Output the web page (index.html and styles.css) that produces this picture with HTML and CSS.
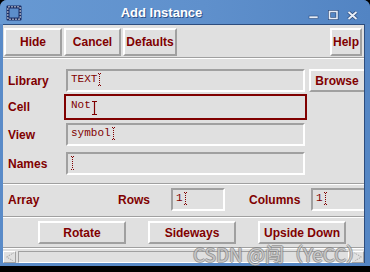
FILE: index.html
```html
<!DOCTYPE html>
<html lang="en">
<head>
    <meta charset="UTF-8">
    <link rel="stylesheet" href="styles.css">
</head>
<body>
    <div class="window">
        <!-- Title bar -->
        <div class="titlebar">
            <svg class="win-icon" width="16" height="16" viewBox="0 0 16 16">
                <rect x="0.5" y="0.5" width="15" height="15" rx="1" fill="#1b2d63"/>
                <rect x="2" y="2" width="12" height="12" fill="none" stroke="#ffffff" stroke-width="1" stroke-dasharray="2 1"/>
                <rect x="3" y="3" width="10" height="10" fill="#5c8dca" stroke="#1b2d63" stroke-width="1"/>
            </svg>
            <div class="title">Add Instance</div>
            <svg class="win-controls" width="56" height="24" viewBox="0 0 56 24">
                <rect x="4" y="16" width="9" height="2.5" fill="#e6edf7" stroke="#2b4a7c" stroke-width="0.6"/>
                <rect x="24.5" y="11.5" width="7.5" height="7" fill="none" stroke="#2b4a7c" stroke-width="3"/>
                <rect x="24.5" y="11.5" width="7.5" height="7" fill="none" stroke="#e6edf7" stroke-width="1.6"/>
                <path d="M43.5 12 L51.5 19 M51.5 12 L43.5 19" stroke="#2b4a7c" stroke-width="3.6"/>
                <path d="M43.5 12 L51.5 19 M51.5 12 L43.5 19" stroke="#e6edf7" stroke-width="2"/>
            </svg>
        </div>

        <div class="frame">
            <div class="content">
                <!-- Top buttons -->
                <div class="toolbar">
                    <button class="btn btn-hide">Hide</button>
                    <button class="btn btn-cancel">Cancel</button>
                    <button class="btn btn-defaults">Defaults</button>
                    <span class="spacer"></span>
                    <button class="btn btn-help">Help</button>
                </div>
                <div class="sep"></div>

                <!-- Form -->
                <div class="form">
                    <div class="row row-library">
                        <label class="lbl">Library</label>
                        <div class="field">TEXT<svg class="caret" width="4" height="13" viewBox="0 0 4 13"><path d="M0 0.5H3 M1.5 1V12 M0 12.5H3" stroke="#800000" stroke-width="1" stroke-dasharray="1 1"/></svg></div>
                        <button class="btn btn-browse">Browse</button>
                    </div>
                    <div class="row row-cell">
                        <label class="lbl">Cell</label>
                        <div class="focus-ring">
                            <div class="field field-focus">Not<svg class="caret" width="5" height="14" viewBox="0 0 5 14"><path d="M0 0.5H5 M2.5 1V13 M0 13.5H5" stroke="#800000" stroke-width="1.2"/></svg></div>
                        </div>
                    </div>
                    <div class="row row-view">
                        <label class="lbl">View</label>
                        <div class="field">symbol<svg class="caret" width="4" height="13" viewBox="0 0 4 13"><path d="M0 0.5H3 M1.5 1V12 M0 12.5H3" stroke="#800000" stroke-width="1" stroke-dasharray="1 1"/></svg></div>
                    </div>
                    <div class="row row-names">
                        <label class="lbl">Names</label>
                        <div class="field field-empty"><svg class="caret" width="4" height="14" viewBox="0 0 4 14"><path d="M0 0.5H3 M1.5 1V13 M0 13.5H3" stroke="#800000" stroke-width="1" stroke-dasharray="1 1"/></svg></div>
                    </div>
                </div>
                <div class="sep"></div>

                <!-- Array -->
                <div class="array-row">
                    <label class="lbl lbl-array">Array</label>
                    <label class="lbl lbl-rows">Rows</label>
                    <div class="field field-small">1<svg class="caret" width="4" height="13" viewBox="0 0 4 13"><path d="M0 0.5H3 M1.5 1V12 M0 12.5H3" stroke="#800000" stroke-width="1" stroke-dasharray="1 1"/></svg></div>
                    <label class="lbl lbl-columns">Columns</label>
                    <div class="field field-small field-cols">1<svg class="caret" width="4" height="13" viewBox="0 0 4 13"><path d="M0 0.5H3 M1.5 1V12 M0 12.5H3" stroke="#800000" stroke-width="1" stroke-dasharray="1 1"/></svg></div>
                </div>
                <div class="sep"></div>

                <!-- Actions -->
                <div class="actions">
                    <button class="btn btn-action">Rotate</button>
                    <button class="btn btn-action">Sideways</button>
                    <button class="btn btn-action">Upside Down</button>
                </div>
                <div class="sep"></div>

                <!-- Horizontal scrollbar -->
                <div class="hscroll">
                    <div class="arrow">
                        <svg width="10" height="10" viewBox="0 0 10 10"><path d="M8.5 1 L1.5 5 L8.5 9" fill="none" stroke="#9a9a9a" stroke-width="1" stroke-dasharray="1 1"/></svg>
                    </div>
                    <div class="trough"></div>
                    <div class="arrow">
                        <svg width="10" height="10" viewBox="0 0 10 10"><path d="M1.5 1 L8.5 5 L1.5 9" fill="none" stroke="#9a9a9a" stroke-width="1" stroke-dasharray="1 1"/></svg>
                    </div>
                </div>
            </div>
        </div>

        <div class="watermark">CSDN @闯（YeCC）</div>
    </div>
</body>
</html>
```

FILE: styles.css
```css
/* Reset */
* {
    margin: 0;
    padding: 0;
    box-sizing: border-box;
}

body {
    background-color: #000;
    width: 370px;
    height: 272px;
    overflow: hidden;
    font-family: "Liberation Sans", Arial, sans-serif;
}

/* Window */
.window {
    position: relative;
    width: 370px;
    height: 266px;
    display: flex;
    flex-direction: column;
    background-color: #5a8bc8;
    border-radius: 7px 7px 0 0;
    overflow: hidden;
}

.titlebar {
    height: 24px;
    display: flex;
    align-items: center;
    background: linear-gradient(to right, #6799d3, #5f90cc 55%, #5284c3);
}

.win-icon {
    margin: 1px 0 0 6px;
}

.title {
    flex: 1;
    text-align: center;
    color: #fff;
    font-size: 13px;
    font-weight: bold;
    text-shadow: 1px 1px 0 #2f5288;
    padding-right: 4px;
}

.win-controls {
    margin-right: 9px;
}

.frame {
    flex: 1;
    display: flex;
    padding: 0 5px 3px 3px;
    background: linear-gradient(to right, #5a8bc8, #5586c4);
}

.content {
    flex: 1;
    display: flex;
    flex-direction: column;
    background-color: #e0e0e0;
    border-top: 1px solid #2d4d7e;
    border-right: 1px solid #2d4d7e;
    overflow: hidden;
}

/* Buttons */
.btn {
    font-family: "Liberation Sans", Arial, sans-serif;
    font-size: 12px;
    font-weight: bold;
    color: #800000;
    background-color: #e0e0e0;
    border: 2px solid;
    border-color: #fff #a0a0a0 #a0a0a0 #fff;
    display: flex;
    align-items: center;
    justify-content: center;
    flex-shrink: 0;
}

.toolbar {
    display: flex;
    gap: 2px;
    padding: 3px 2px 1px 1px;
}

.toolbar .btn {
    height: 28px;
}

.btn-hide { width: 58px; }
.btn-cancel { width: 57px; }
.btn-defaults { width: 54px; }
.btn-help { width: 32px; }

.spacer {
    flex: 1;
}

.sep {
    height: 2px;
    flex-shrink: 0;
    border-top: 1px solid #a0a0a0;
    border-bottom: 1px solid #fff;
}

/* Form */
.form {
    display: flex;
    flex-direction: column;
    padding: 10px 0 8px 4px;
}

.row {
    display: flex;
    align-items: center;
}

.row-cell { margin-top: 2px; }
.row-view { margin-top: 3px; }
.row-names { margin-top: 6px; }

.lbl {
    font-size: 12px;
    font-weight: bold;
    color: #800000;
    padding-left: 1px;
    flex-shrink: 0;
}

.row .lbl {
    width: 59px;
}

.field {
    width: 239px;
    height: 23px;
    flex-shrink: 0;
    padding: 2px 0 0 3px;
    border: 2px solid;
    border-color: #a0a0a0 #fff #fff #a0a0a0;
    font-family: "Liberation Mono", "Courier New", monospace;
    font-size: 11px;
    line-height: 13px;
    color: #800000;
    display: flex;
    align-items: flex-start;
}

.caret {
    margin-left: 1px;
}

.field-empty .caret {
    margin-left: 0;
}

.focus-ring {
    margin-left: -2px;
    border: 2px solid #800000;
}

.field-focus {
    height: 22px;
    padding-top: 1px;
    border-color: #e0e0e0;
}

.field-focus .caret {
    margin-top: 2px;
}

.btn-browse {
    width: 60px;
    height: 23px;
    margin-left: 4px;
    padding-right: 4px;
}

/* Array */
.array-row {
    display: flex;
    align-items: center;
    padding: 3px 0 5px 4px;
}

.lbl-array { width: 110px; }
.lbl-rows { width: 54px; }
.lbl-columns {
    margin-left: 23px;
    width: 63px;
}

.field-small {
    width: 54px;
}

.field-cols {
    width: 60px;
}

/* Actions */
.actions {
    display: flex;
    gap: 22px;
    padding: 3px 0 3px 35px;
}

.btn-action {
    width: 88px;
    height: 23px;
}

/* Scrollbar */
.hscroll {
    display: flex;
    gap: 2px;
    padding: 2px 0 0 0;
    height: 14px;
}

.arrow {
    width: 13px;
    height: 12px;
    border: 1px solid;
    border-color: #fff #a0a0a0 #a0a0a0 #fff;
    display: flex;
    align-items: center;
    justify-content: center;
}

.trough {
    flex: 1;
    height: 12px;
    border: 1px solid;
    border-color: #a0a0a0 #fff #fff #a0a0a0;
}

/* Watermark */
.watermark {
    position: absolute;
    left: 193px;
    top: 240px;
    font-family: "Noto Sans CJK SC", "Noto Sans", sans-serif;
    font-size: 19px;
    color: rgba(255, 255, 255, 0.55);
    text-shadow: -1px 0 rgba(120, 120, 120, 0.6), 1px 0 rgba(120, 120, 120, 0.6), 0 -1px rgba(120, 120, 120, 0.6), 0 1px rgba(120, 120, 120, 0.6);
    white-space: nowrap;
}
```
